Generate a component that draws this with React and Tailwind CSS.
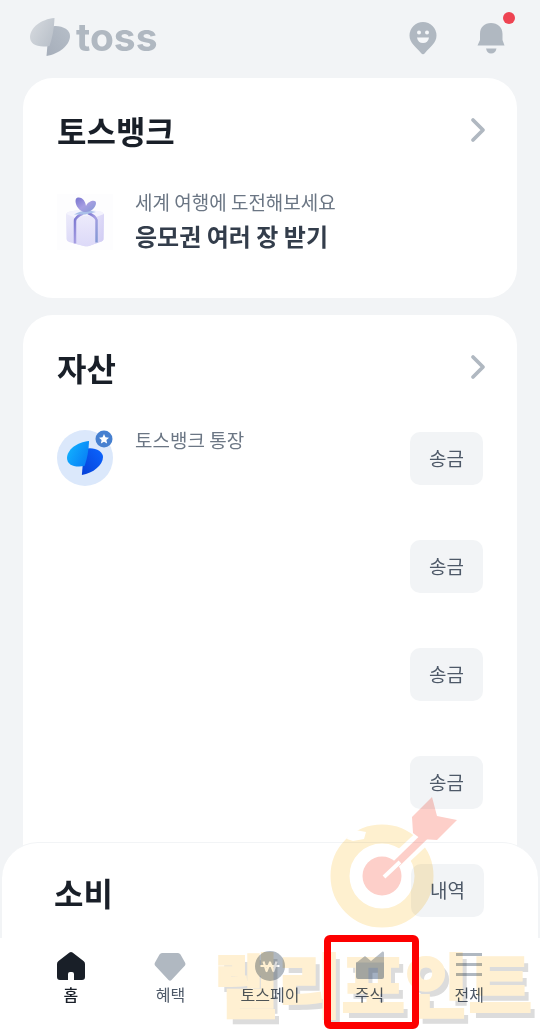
import { ChevronRight } from "lucide-react";

function TossSymbol({ id, className, left, right }) {
  return (
    <svg viewBox="0 0 42 40" className={className} aria-hidden="true">
      <defs>
        <linearGradient id={id + "-l"} x1="0" y1="0.2" x2="1" y2="0.8">
          <stop offset="0" stopColor={left[0]} />
          <stop offset="1" stopColor={left[1]} />
        </linearGradient>
        <linearGradient id={id + "-r"} x1="0" y1="1" x2="1" y2="0">
          <stop offset="0" stopColor={right[0]} />
          <stop offset="1" stopColor={right[1]} />
        </linearGradient>
      </defs>
      <path d="M20 10C31 7 41 12 41 19C41 28 30 37 17.500 39Z" fill={"url(#" + id + "-r)"} />
      <path d="M25.500 1C12 2 1 11 1 20C1 27 8 31 20.500 29Q25 16 25.500 1Z" fill={"url(#" + id + "-l)"} />
    </svg>
  );
}

function Gift() {
  return (
    <svg viewBox="0 0 56 56" className="size-14 shrink-0" aria-hidden="true">
      <defs>
        <linearGradient id="gift-left" x1="0" y1="0" x2="0" y2="1">
          <stop offset="0" stopColor="#eeedfb" />
          <stop offset="1" stopColor="#dbd8f7" />
        </linearGradient>
        <linearGradient id="gift-front" x1="0" y1="0" x2="0" y2="1">
          <stop offset="0" stopColor="#eceafb" />
          <stop offset="1" stopColor="#dcd9f8" />
        </linearGradient>
        <linearGradient id="gift-right" x1="0" y1="0" x2="1" y2="1">
          <stop offset="0" stopColor="#e6e3fa" />
          <stop offset="1" stopColor="#cfcaf3" />
        </linearGradient>
        <linearGradient id="gift-bow" x1="0" y1="0" x2="1" y2="1">
          <stop offset="0" stopColor="#7773cf" />
          <stop offset="0.500" stopColor="#a79fe2" />
          <stop offset="1" stopColor="#8298d4" />
        </linearGradient>
      </defs>
      <rect width="56" height="56" fill="#fdfdfe" />
      <path d="M9 21Q9 18 13 17.500L28 15L43 17.500Q47 18 47 21L46.500 45Q46.500 47 43 48L32 52Q29 52.500 27 52L12 48Q9.500 47 9.500 45Z" fill="url(#gift-left)" />
      <path d="M38 23L47 20L46.500 45Q46.500 47 43 48L37 50Z" fill="url(#gift-right)" />
      <path d="M19 24Q29 20 40 23V49L32 52Q29 52.500 27 52L19 50Z" fill="url(#gift-front)" />
      <path d="M9.500 20Q10 18 13 17.500L28 15L43 17.500Q46.500 18 46.500 20L39 23Q29 20 19 24Z" fill="#f4f3fd" />
      <path d="M18 49.500V27Q18 23 26 19.500" fill="none" stroke="url(#gift-bow)" strokeWidth="2.500" />
      <path d="M39.500 48.500V26Q38.500 22 31 19" fill="none" stroke="url(#gift-bow)" strokeWidth="2.500" />
      <path d="M17 20.500Q26 14.500 39 18L28 20.500Z" fill="#a9bfe9" />
      <path d="M27 18C19 16 16 4 21 3.500C26 3 28.500 8 29 12C31 7 39 5 39 9C39 13 34 19 27 18Z" fill="url(#gift-bow)" />
    </svg>
  );
}

function SectionHead({ children }) {
  return (
    <div className="-mr-[15px] flex items-center justify-between">
      <h2 className="text-[32px] leading-10 font-bold text-[#191f28]">{children}</h2>
      <a href="#more" aria-label="더 보기" className="text-[#b0b8c1]">
        <ChevronRight className="size-10" strokeWidth={2.25} />
      </a>
    </div>
  );
}

function PillButton({ children }) {
  return (
    <button className="h-[53px] w-[73px] rounded-[10px] bg-[#f2f4f6] text-[19px] text-[#4e5968]">
      {children}
    </button>
  );
}

const tabs = [
  {
    label: "홈",
    active: true,
    icon: (
      <path
        d="M14.500 2.500Q16 1.500 17.500 2.500L28.500 11Q30 12 30 14V27Q30 30 27 30H19V24Q19 22 17 22H15Q13 22 13 24V30H5Q2 30 2 27V14Q2 12 3.500 11Z"
        fill="#191f28"
      />
    ),
  },
  {
    label: "혜택",
    icon: <path d="M8 3H24Q25.500 3 26.500 4.500L31 12.500Q32 14 31 15.500L17.500 30Q16 31.500 14.500 30L1 15.500Q0 14 1 12.500L5.500 4.500Q6.500 3 8 3Z" fill="#b0b8c1" />,
  },
  {
    label: "토스페이",
    icon: (
      <>
        <circle cx="16" cy="16" r="15" fill="#b0b8c1" />
        <path d="M9.500 11.500L12.500 21L16 12.500L19.500 21L22.500 11.500M6.500 16H25.500" fill="none" stroke="#fff" strokeWidth="2.200" strokeLinejoin="round" />
      </>
    ),
  },
  {
    label: "주식",
    marked: true,
    icon: (
      <>
        <path d="M2 15V13L11 6L17 11L28.500 1.500Q30 1 30 3V15Z" fill="#b9c0c8" />
        <path d="M2 12.500H30V27Q30 29 28 29H4Q2 29 2 27Z" fill="#a3b0c2" />
      </>
    ),
  },
  {
    label: "전체",
    icon: <path d="M3 4.500H29M3 14.500H29M3 24.500H29" stroke="#b0b8c1" strokeWidth="3.200" />,
  },
];

function TargetMark() {
  return (
    <svg viewBox="0 0 128 132" className="absolute right-[82px] bottom-[107px] w-32 mix-blend-multiply" aria-hidden="true">
      <circle cx="52" cy="80" r="42" fill="none" stroke="#fef0cf" strokeWidth="19" />
      <path d="M17 43L23 45L34 43L36 36L20 33Z" fill="#fff" />
      <circle cx="52" cy="80" r="19.500" fill="#fdcfc9" />
      <path d="M67 66L99 36" stroke="#fff" strokeWidth="17" />
      <path d="M61 73L96 39" stroke="#fdcfc9" strokeWidth="7.500" />
      <path d="M54 81L70 66" stroke="#fff" strokeWidth="4" />
      <path d="M82 21L102 1L107 20L127 24L107 44L91 43L83 37Z" fill="#fdcfc9" />
    </svg>
  );
}

export default function App() {
  return (
    <div className="relative min-h-screen overflow-hidden bg-[#f2f4f6] font-['Noto_Sans_CJK_KR',sans-serif]">
      <header className="flex h-[78px] items-start justify-between pt-[17px] pr-[33px] pl-[29px]">
        <a href="#home" className="flex items-center gap-[5px] text-[#b0b8c1]">
          <TossSymbol id="brand" className="h-10 w-[42px]" left={["#d5d9de", "#b9c0c9"]} right={["#a6aeba", "#b6bec8"]} />
          <span className="font-['Inter',sans-serif] text-[39px] leading-10 font-bold">toss</span>
        </a>
        <div className="flex items-center gap-9">
          <button aria-label="내 주변">
            <svg viewBox="0 0 32 40" className="h-10 w-8" aria-hidden="true">
              <path d="M16 5A13.500 13.500 0 0 0 2.500 18.500C2.500 26 9 30 14 36Q16 38.500 18 36C23 30 29.500 26 29.500 18.500A13.500 13.500 0 0 0 16 5Z" fill="#b0b8c1" />
              <circle cx="12" cy="15.500" r="2" fill="#f5f7f9" />
              <circle cx="20" cy="15.500" r="2" fill="#f5f7f9" />
              <path d="M10 20.500H22Q21 26 16 26Q11 26 10 20.500Z" fill="#f5f7f9" />
            </svg>
          </button>
          <button aria-label="알림" className="relative">
            <svg viewBox="0 0 32 40" className="h-10 w-8" aria-hidden="true">
              <path d="M5 23V17C5 10 9.500 6 16 6S27.500 10 27.500 17V23L29.500 28.500H2.500Z" fill="#b0b8c1" />
              <path d="M11 31.500H21.500Q20.500 36.500 16 36.500Q12 36.500 11 31.500Z" fill="#b0b8c1" />
            </svg>
            <span className="absolute -top-[5px] -right-2 size-3 rounded-full bg-[#ee4352]" />
          </button>
        </div>
      </header>

      <main>
        <section className="mx-[23px] rounded-[30px] bg-white px-[34px] pt-8 pb-[42px]">
          <SectionHead>토스뱅크</SectionHead>
          <a href="#event" className="mt-[38px] flex items-center gap-[22px]">
            <Gift />
            <span className="flex flex-col">
              <span className="text-[19px] leading-7 text-[#6b7684]">세계 여행에 도전해보세요</span>
              <span className="text-2xl leading-10 font-bold text-[#333d4b]">응모권 여러 장 받기</span>
            </span>
          </a>
        </section>

        <section className="mx-[23px] mt-[17px] rounded-t-[30px] bg-white px-[34px] pt-8 pb-[42px]">
          <SectionHead>자산</SectionHead>
          <ul className="mt-[17px]">
            {[0, 1, 2, 3].map((row) => (
              <li key={row} className="flex h-[108px] items-center">
                {row === 0 && (
                  <>
                    <span className="relative flex size-14 items-center justify-center rounded-full bg-[#dbe8fb]">
                      <TossSymbol id="bank" className="h-9 w-[38px]" left={["#12b4ff", "#087cf5"]} right={["#0640d8", "#0b66ff"]} />
                      <svg viewBox="0 0 18 18" className="absolute top-0 right-0 size-[18px]" aria-hidden="true">
                        <circle cx="9" cy="9" r="8.500" fill="#4680d0" />
                        <path d="M9 4L10.500 7.300L14 7.700L11.400 10L12.100 13.500L9 11.800L5.900 13.500L6.600 10L4 7.700L7.500 7.300Z" fill="#fff" />
                      </svg>
                    </span>
                    <span className="ml-[22px] h-14 text-[19px] leading-5 text-[#6b7684]">토스뱅크 통장</span>
                  </>
                )}
                <span className="ml-auto">
                  <PillButton>송금</PillButton>
                </span>
              </li>
            ))}
          </ul>
        </section>

        <section className="relative mx-0.5 -mt-9 flex h-24 items-center justify-between rounded-t-[36px] border-t border-[#f2f4f6] bg-white pr-[54px] pl-[52px]">
          <h2 className="pt-0.5 text-[32px] leading-10 font-bold text-[#191f28]">소비</h2>
          <PillButton>내역</PillButton>
        </section>
      </main>

      <nav className="relative h-[97px] bg-white px-[21px] pt-3">
        <ul className="grid grid-cols-5">
          {tabs.map((tab) => (
            <li key={tab.label} className="relative">
              <a href="#tab" className="flex flex-col items-center">
                <svg viewBox="0 0 32 32" className="size-8" aria-hidden="true">
                  {tab.icon}
                </svg>
                <span className={tab.active ? "text-base font-medium text-[#191f28]" : "text-base text-[#4e5968]"}>
                  {tab.label}
                </span>
              </a>
              {tab.marked && (
                <span className="absolute -top-[15px] left-1 z-20 h-[94px] w-[95px] rounded-md border-[7px] border-[#fd0000]" />
              )}
            </li>
          ))}
        </ul>
        <p className="pointer-events-none absolute right-2 bottom-2 z-10 text-[69px] leading-[90px] font-black whitespace-nowrap text-[#fff0d2] mix-blend-multiply [-webkit-text-stroke:2px_#fff0d2] [text-shadow:5px_6px_0_#dcdcdc]">
          랠리포인트
        </p>
      </nav>
      <TargetMark />
    </div>
  );
}
